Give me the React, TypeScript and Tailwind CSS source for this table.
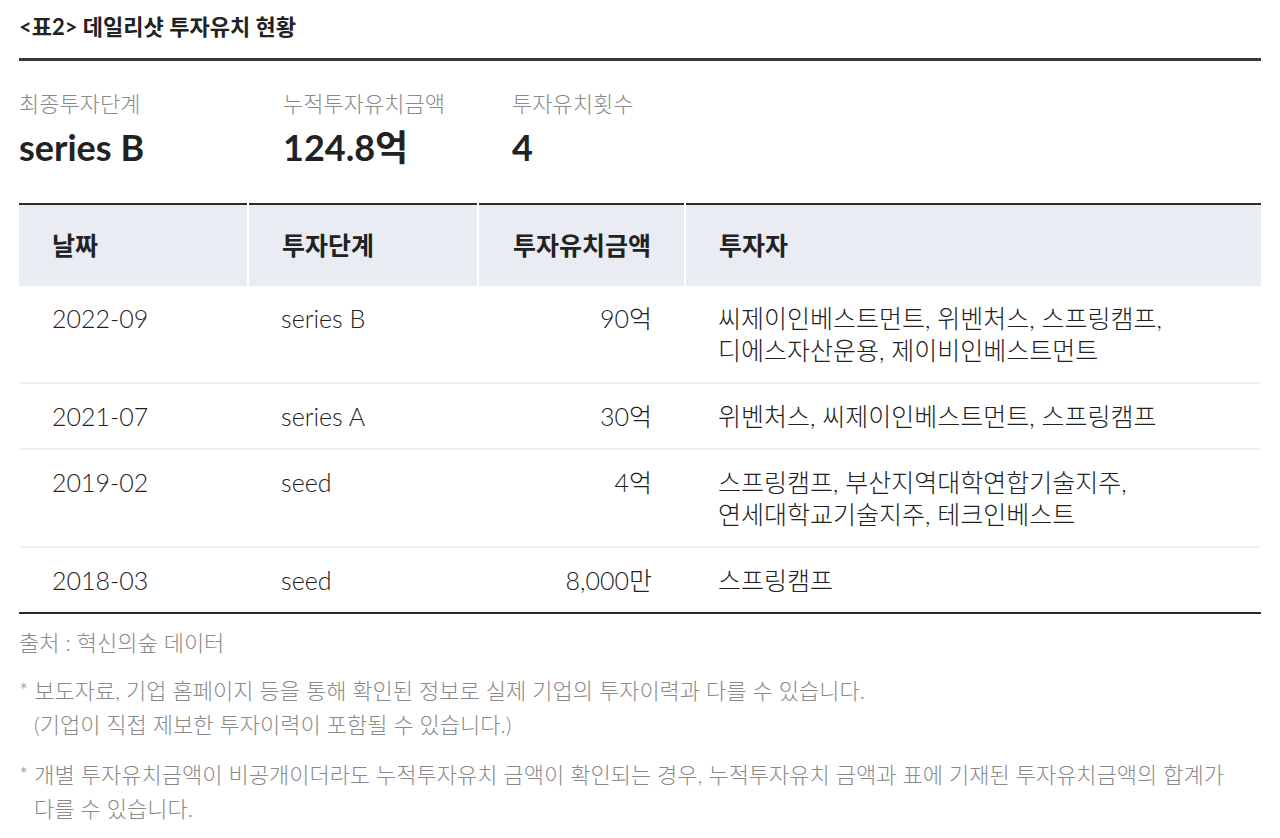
import React from 'react';

const rows = [
  { date: '2022-09', stage: 'series B', amount: '90억', investors: ['씨제이인베스트먼트, 위벤처스, 스프링캠프,', '디에스자산운용, 제이비인베스트먼트'] },
  { date: '2021-07', stage: 'series A', amount: '30억', investors: ['위벤처스, 씨제이인베스트먼트, 스프링캠프'] },
  { date: '2019-02', stage: 'seed', amount: '4억', investors: ['스프링캠프, 부산지역대학연합기술지주,', '연세대학교기술지주, 테크인베스트'] },
  { date: '2018-03', stage: 'seed', amount: '8,000만', investors: ['스프링캠프'] },
];

const stats = [
  { label: '최종투자단계', value: 'series B', width: 'w-[264px]' },
  { label: '누적투자유치금액', value: '124.8억', width: 'w-[229px]' },
  { label: '투자유치횟수', value: '4', width: 'w-[200px]' },
];

export default function App() {
  return (
    <div className="min-h-screen bg-white px-[19px] pt-[11px] text-[#222] font-['Lato','Noto_Sans_CJK_KR',sans-serif]">
      {/* 제목 */}
      <h2 className="text-[22px] font-bold leading-[32px] pb-[15px] border-b-[3px] border-[#3a3a3c]">
        &lt;표2&gt; 데일리샷 투자유치 현황
      </h2>

      {/* 요약 */}
      <div className="flex pt-[28px] pb-[33px]">
        {stats.map((s) => (
          <div key={s.label} className={s.width}>
            <p className="text-[22px] leading-[30px] text-[#8a8a8a] font-light">{s.label}</p>
            <p className="text-[36px] leading-[46px] font-bold mt-[5px]">{s.value}</p>
          </div>
        ))}
      </div>

      {/* 테이블 */}
      <table className="w-full border-collapse border-t-2 border-b-2 border-[#2b2b2b] text-[25px]">
        <thead>
          <tr className="bg-[#e9edf3] h-[82px]">
            <th className="w-[229px] text-left font-bold px-[33px] border-r-2 border-white">날짜</th>
            <th className="w-[230px] text-left font-bold px-[33px] border-r-2 border-white">투자단계</th>
            <th className="w-[207px] text-right font-bold px-[33px] border-r-2 border-white">투자유치금액</th>
            <th className="text-left font-bold px-[33px]">투자자</th>
          </tr>
        </thead>
        <tbody className="font-light">
          {rows.map((r, i) => (
            <tr key={r.date} className={i < rows.length - 1 ? 'border-b-2 border-[#eef1f6]' : ''}>
              <td className="align-top px-[33px] pt-[16px] pb-[16px] leading-[32px]">{r.date}</td>
              <td className="align-top px-[33px] pt-[16px] pb-[16px] leading-[32px]">{r.stage}</td>
              <td className="align-top px-[33px] pt-[16px] pb-[16px] leading-[32px] text-right">{r.amount}</td>
              <td className="align-top px-[33px] pt-[16px] pb-[16px] leading-[32px]">
                {r.investors.map((line) => (
                  <div key={line}>{line}</div>
                ))}
              </td>
            </tr>
          ))}
        </tbody>
      </table>

      {/* 출처 및 주석 */}
      <p className="mt-[12px] text-[22px] leading-[34px] text-[#8a8a8a] font-light">출처 : 혁신의숲 데이터</p>
      <div className="mt-[14px] text-[22px] leading-[34px] text-[#8a8a8a] font-light space-y-[16px]">
        <p className="pl-[15px] -indent-[15px]">
          * 보도자료, 기업 홈페이지 등을 통해 확인된 정보로 실제 기업의 투자이력과 다를 수 있습니다.
          <br />(기업이 직접 제보한 투자이력이 포함될 수 있습니다.)
        </p>
        <p className="pl-[15px] -indent-[15px]">
          * 개별 투자유치금액이 비공개이더라도 누적투자유치 금액이 확인되는 경우, 누적투자유치 금액과 표에 기재된 투자유치금액의 합계가
          <br />다를 수 있습니다.
        </p>
      </div>
    </div>
  );
}
